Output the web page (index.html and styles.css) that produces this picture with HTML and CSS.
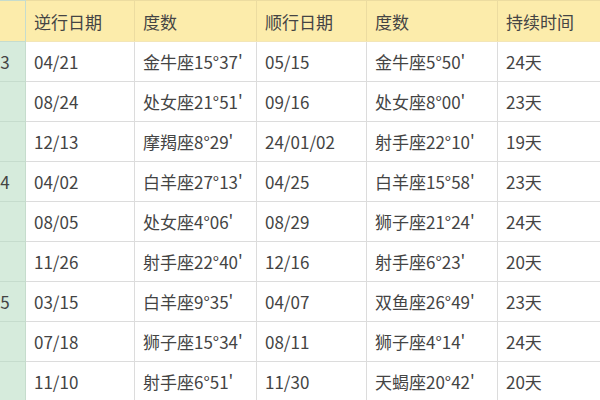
FILE: index.html
```html
<!DOCTYPE html>
<html lang="zh-CN">
<head>
<meta charset="utf-8">
<link rel="stylesheet" href="styles.css">
</head>
<body>
<div class="frame">
<table class="retro">
<colgroup>
<col class="c0"><col class="c1"><col class="c2"><col class="c3"><col class="c4"><col class="c5">
</colgroup>
<thead>
<tr><th class="yr">年</th><th>逆行日期</th><th>度数</th><th>顺行日期</th><th>度数</th><th>持续时间</th></tr>
</thead>
<tbody>
<tr><td class="yr">2023</td><td>04/21</td><td>金牛座15°37'</td><td>05/15</td><td>金牛座5°50'</td><td>24天</td></tr>
<tr><td class="yr"></td><td>08/24</td><td>处女座21°51'</td><td>09/16</td><td>处女座8°00'</td><td>23天</td></tr>
<tr><td class="yr"></td><td>12/13</td><td>摩羯座8°29'</td><td>24/01/02</td><td>射手座22°10'</td><td>19天</td></tr>
<tr><td class="yr">2024</td><td>04/02</td><td>白羊座27°13'</td><td>04/25</td><td>白羊座15°58'</td><td>23天</td></tr>
<tr><td class="yr"></td><td>08/05</td><td>处女座4°06'</td><td>08/29</td><td>狮子座21°24'</td><td>24天</td></tr>
<tr><td class="yr"></td><td>11/26</td><td>射手座22°40'</td><td>12/16</td><td>射手座6°23'</td><td>20天</td></tr>
<tr><td class="yr">2025</td><td>03/15</td><td>白羊座9°35'</td><td>04/07</td><td>双鱼座26°49'</td><td>23天</td></tr>
<tr><td class="yr"></td><td>07/18</td><td>狮子座15°34'</td><td>08/11</td><td>狮子座4°14'</td><td>24天</td></tr>
<tr><td class="yr"></td><td>11/10</td><td>射手座6°51'</td><td>11/30</td><td>天蝎座20°42'</td><td>20天</td></tr>
</tbody>
</table>
</div>
</body>
</html>
```
FILE: styles.css
```css
html, body {
  margin: 0;
  padding: 0;
  background: #ffffff;
}
.frame {
  width: 600px;
  height: 400px;
  overflow: hidden;
}
.retro {
  border-collapse: collapse;
  table-layout: fixed;
  width: 700px;
  margin-left: -37px;
  font-family: "Noto Sans CJK SC", "Noto Sans", sans-serif;
  font-size: 17px;
  color: #444444;
}
.c0 { width: 62px; }
.c1 { width: 109px; }
.c2 { width: 122px; }
.c3 { width: 110px; }
.c4 { width: 131px; }
.c5 { width: 166px; }
.retro th, .retro td {
  text-align: left;
  font-weight: normal;
  padding: 0 0 0 8px;
  white-space: nowrap;
  overflow: hidden;
  border: 1px solid #dcdcdc;
}
.retro thead th {
  height: 40px;
  background: #fcecab;
  border-color: #ecdca0;
  border-bottom-color: #f3e6b8;
}
.retro tbody td {
  height: 39px;
}
.retro .yr {
  background: #d6ebdc;
  border-color: #c6dccd;
}
.retro thead .yr {
  background: #fcecab;
}
```
